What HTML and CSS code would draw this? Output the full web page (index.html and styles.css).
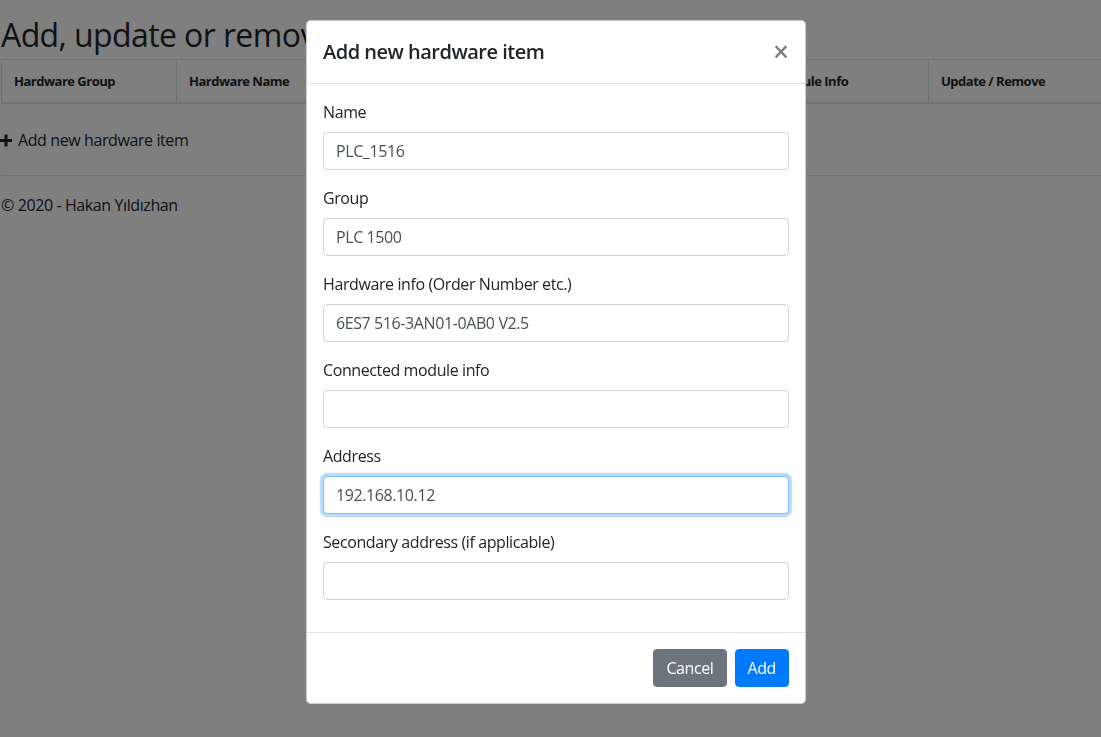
FILE: index.html
```html
<!DOCTYPE html>
<html lang="en">
<head>
<meta charset="utf-8">
<title>Hardware items</title>
<link rel="stylesheet" href="styles.css">
</head>
<body>
<div class="page">
  <main class="main">
    <h1 class="title">Add, update or remove hardware items</h1>
    <table class="hw-table">
      <thead>
        <tr>
          <th class="c-group">Hardware Group</th>
          <th class="c-name">Hardware Name</th>
          <th class="c-info">Hardware Info</th>
          <th class="c-addr">Address</th>
          <th class="c-mod">Connected Module Info</th>
          <th class="c-act">Update / Remove</th>
        </tr>
      </thead>
      <tbody></tbody>
    </table>
    <p class="add-row"><a class="add-link" href="#"><svg class="plus" width="12" height="13" viewBox="0 0 12 13"><rect x="4.5" y="0.5" width="3" height="12" fill="currentColor"/><rect x="0" y="5" width="12" height="3" fill="currentColor"/></svg>Add new hardware item</a></p>
  </main>
  <footer class="footer">© 2020 - Hakan Yıldızhan</footer>
</div>

<div class="backdrop"></div>

<div class="modal">
  <div class="modal-dialog">
    <div class="modal-content">
      <div class="modal-header">
        <h5 class="modal-title">Add new hardware item</h5>
        <button class="close" type="button">×</button>
      </div>
      <div class="modal-body">
        <div class="form-group">
          <label class="label">Name</label>
          <input class="input" type="text" value="PLC_1516">
        </div>
        <div class="form-group">
          <label class="label">Group</label>
          <input class="input" type="text" value="PLC 1500">
        </div>
        <div class="form-group">
          <label class="label">Hardware info (Order Number etc.)</label>
          <input class="input" type="text" value="6ES7 516-3AN01-0AB0 V2.5">
        </div>
        <div class="form-group">
          <label class="label">Connected module info</label>
          <input class="input" type="text" value="">
        </div>
        <div class="form-group">
          <label class="label">Address</label>
          <input class="input input-focus" type="text" value="192.168.10.12">
        </div>
        <div class="form-group">
          <label class="label">Secondary address (if applicable)</label>
          <input class="input" type="text" value="">
        </div>
      </div>
      <div class="modal-footer">
        <button class="btn btn-secondary" type="button">Cancel</button>
        <button class="btn btn-primary" type="button">Add</button>
      </div>
    </div>
  </div>
</div>
</body>
</html>
```

FILE: styles.css
```css
html, body {
  margin: 0;
  padding: 0;
  overflow: hidden;
  height: 100%;
}

body {
  font-family: "Open Sans", "Noto Sans", "Liberation Sans", sans-serif;
  font-size: 16px;
  line-height: 1.5;
  letter-spacing: -0.4px;
  color: #212529;
  background: #fff;
}

.page {
  padding: 11px 0 0 1px;
}

.title {
  margin: 0;
  font-size: 32px;
  font-weight: 500;
  line-height: 48px;
  letter-spacing: -0.6px;
  white-space: nowrap;
}

.hw-table {
  border-collapse: collapse;
  table-layout: fixed;
  width: 1100px;
  font-size: 13px;
  line-height: 18px;
  letter-spacing: -0.5px;
}

.hw-table th {
  box-sizing: border-box;
  text-align: left;
  font-weight: 700;
  padding: 12px;
  border: 1px solid #dee2e6;
  border-bottom: 2px solid #dee2e6;
  white-space: nowrap;
  overflow: hidden;
}

.c-group { width: 175px; }
.c-name { width: 160px; }
.c-info { width: 200px; }
.c-addr { width: 159px; }
.c-mod { width: 233px; }
.c-act { width: 173px; }

.add-row {
  margin: 24px 0 0;
  padding-bottom: 22px;
}

.add-link {
  color: #212529;
  text-decoration: none;
  display: inline-flex;
  align-items: center;
  gap: 6px;
  margin-left: -1px;
}

.plus {
  display: block;
}

.footer {
  border-top: 1px solid #dee2e6;
  line-height: 58px;
  color: #212529;
}

.backdrop {
  position: fixed;
  inset: 0;
  background: rgba(0, 0, 0, 0.5);
}

.modal {
  position: fixed;
  inset: 0;
}

.modal-dialog {
  width: 500px;
  margin: 20px 0 0 306px;
}

.modal-content {
  background: #fff;
  border: 1px solid rgba(0, 0, 0, 0.2);
  border-radius: 4.8px;
  display: flex;
  flex-direction: column;
}

.modal-header {
  display: flex;
  align-items: flex-start;
  justify-content: space-between;
  padding: 16px;
  border-bottom: 1px solid #dee2e6;
}

.modal-title {
  margin: 0;
  font-size: 20px;
  font-weight: 600;
  line-height: 30px;
  letter-spacing: -0.5px;
}

.close {
  padding: 16px;
  margin: -16px -16px -16px auto;
  background: transparent;
  border: 0;
  font-family: inherit;
  font-size: 28px;
  font-weight: 600;
  line-height: 1;
  color: #000;
  opacity: 0.5;
  text-shadow: 0 1px 0 #fff;
  cursor: pointer;
}

.modal-body {
  padding: 16px;
}

.form-group {
  margin-bottom: 16px;
}

.label {
  display: inline-block;
  margin-bottom: 8px;
}

.input {
  display: block;
  box-sizing: border-box;
  width: 100%;
  height: 38px;
  padding: 6px 12px;
  font-family: inherit;
  font-size: 16px;
  line-height: 1.5;
  letter-spacing: -0.4px;
  color: #495057;
  background: #fff;
  border: 1px solid #ced4da;
  border-radius: 4px;
  outline: none;
}

.input-focus {
  border-color: #80bdff;
  box-shadow: 0 0 0 3.2px rgba(0, 123, 255, 0.25);
}

.modal-footer {
  display: flex;
  align-items: center;
  justify-content: flex-end;
  padding: 12px;
  border-top: 1px solid #dee2e6;
}

.btn {
  margin: 4px;
  padding: 6px 12px;
  font-family: inherit;
  font-size: 16px;
  line-height: 1.5;
  letter-spacing: -0.4px;
  border: 1px solid transparent;
  border-radius: 4px;
  color: #fff;
  cursor: pointer;
}

.btn-secondary {
  background: #6c757d;
  border-color: #6c757d;
}

.btn-primary {
  background: #007bff;
  border-color: #007bff;
}
```
